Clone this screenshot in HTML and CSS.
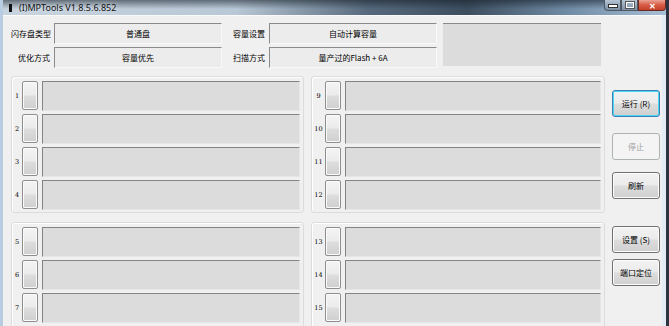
FILE: index.html
```html
<!DOCTYPE html>
<html lang="zh-CN">
<head>
    <meta charset="UTF-8">
    <title>(I)MPTools V1.8.5.6.852</title>
    <link rel="stylesheet" href="styles.css">
</head>
<body>
    <div class="window">
        <div class="titlebar">
            <span class="app-icon"></span>
            <span class="title">(I)MPTools V1.8.5.6.852</span>
            <div class="caption-btns">
                <span class="cap cap-min"><i></i></span>
                <span class="cap cap-max"><i></i></span>
                <span class="cap cap-close">&#x2715;</span>
            </div>
        </div>

        <div class="client">
            <!-- settings summary -->
            <div class="info">
                <div class="info-col">
                    <div class="info-row">
                        <label class="info-label">闪存盘类型</label>
                        <div class="info-field">普通盘</div>
                    </div>
                    <div class="info-row">
                        <label class="info-label">优化方式</label>
                        <div class="info-field">容量优先</div>
                    </div>
                </div>
                <div class="info-col">
                    <div class="info-row">
                        <label class="info-label wide">容量设置</label>
                        <div class="info-field">自动计算容量</div>
                    </div>
                    <div class="info-row">
                        <label class="info-label wide">扫描方式</label>
                        <div class="info-field">量产过的Flash + 6A</div>
                    </div>
                </div>
                <div class="status-box"></div>
            </div>

            <div class="main">
                <div class="ports" id="ports"></div>

                <div class="side">
                    <button class="btn default btn-run">运行 (R)</button>
                    <button class="btn btn-stop" disabled>停止</button>
                    <button class="btn btn-refresh">刷新</button>
                    <button class="btn btn-settings">设置 (S)</button>
                    <button class="btn btn-locate">端口定位</button>
                </div>
            </div>
        </div>
        <div class="frame-right"></div>
    </div>

    <script>
        // port groups; the lower ones run past the window bottom, so only the visible rows
        const groups = [[1, 2, 3, 4], [9, 10, 11, 12], [5, 6, 7], [13, 14, 15]];
        const ports = document.getElementById('ports');

        for (let g = 0; g < groups.length; g++) {
            const box = document.createElement('div');
            box.className = 'group' + (g % 2 ? ' group-right' : '') + (g > 1 ? ' group-lower' : '');
            box.innerHTML = groups[g].map(n => `
                <div class="port">
                    <span class="num">${n}</span>
                    <span class="port-btn"></span>
                    <div class="port-field"></div>
                </div>`).join('');
            ports.appendChild(box);
        }
    </script>
</body>
</html>
```

FILE: styles.css
```css
body {
    margin: 0;
    padding: 0;
    width: 669px;
    height: 326px;
    overflow: hidden;
    font-family: "Noto Sans CJK SC", "Noto Sans", sans-serif;
    font-size: 8px;
    color: #000;
    background-color: #2b3440;
}
.window {
    position: relative;
    width: 666px;
    height: 326px;
    overflow: hidden;
    background: #dfe8f1;
    border-left: 3px solid #b8cde2;
    box-sizing: border-box;
}

/* title bar */
.titlebar {
    position: relative;
    height: 15px;
    display: flex;
    align-items: center;
    padding-left: 3px;
    background:
        linear-gradient(180deg, rgba(20, 30, 40, 0.55) 0%, rgba(20, 30, 40, 0) 60%),
        linear-gradient(90deg, #c7d3de 0%, #b9c8d6 35%, #56697c 55%, #3c4d5e 70%, #6f8aa4 85%, #a8c0d6 100%);
}
.app-icon {
    width: 3px;
    height: 8px;
    background: #111;
    margin-left: 3px;
    margin-right: 7px;
}
.title {
    font-family: "Noto Sans", sans-serif;
    font-size: 9px;
    color: #111;
    text-shadow: 0 0 4px #e8eef4;
}
.caption-btns {
    position: absolute;
    top: 0;
    right: 0;
    display: flex;
}
.cap {
    height: 11px;
    display: flex;
    align-items: center;
    justify-content: center;
    border: 1px solid #4c5864;
    border-top: none;
    box-sizing: border-box;
}
.cap-min, .cap-max {
    width: 17px;
    background: linear-gradient(180deg, #b4c3d2, #7c90a4);
}
.cap-min {
    border-radius: 0 0 0 4px;
    align-items: flex-end;
    padding-bottom: 2px;
}
.cap-min i {
    width: 8px;
    height: 2px;
    background: #fff;
    border: 1px solid #333;
}
.cap-max i {
    width: 6px;
    height: 4px;
    border: 1px solid #fff;
    outline: 1px solid #555;
}
.cap-close {
    width: 28px;
    background: linear-gradient(180deg, #e9a394, #d65a44 50%, #c4412b);
    border-color: #6a2a20;
    border-radius: 0 0 4px 0;
    color: #fff;
    font-size: 8px;
    font-weight: bold;
}

/* client area */
.client {
    background: #f0f0f0;
    height: 311px;
    width: 659px;
    box-sizing: border-box;
    padding: 7px 0 0 8px;
    border-top: 1px solid #fafafa;
}
.info {
    display: flex;
    height: 44px;
}
.info-col {
    display: flex;
    flex-direction: column;
    gap: 3px;
}
.info-row {
    display: flex;
    align-items: center;
    height: 21px;
}
.info-label {
    width: 43px;
    padding-right: 4px;
    box-sizing: border-box;
    text-align: right;
    white-space: nowrap;
}
.info-label.wide {
    width: 47px;
}
.info-field {
    width: 168px;
    height: 21px;
    box-sizing: border-box;
    display: flex;
    align-items: center;
    justify-content: center;
    background: #ececec;
    border: 1px solid #f8f8f8;
    border-top-color: #8a8a8a;
    border-left-color: #8a8a8a;
}
.status-box {
    width: 158px;
    height: 43px;
    margin-left: 6px;
    box-sizing: border-box;
    background: #dcdcdc;
    border-top: 1px solid #8a8a8a;
}

/* ports */
.main {
    display: flex;
    margin-top: 9px;
}
.ports {
    display: grid;
    grid-template-columns: 293px 294px;
    column-gap: 7px;
    row-gap: 9px;
    width: 594px;
}
.group {
    display: flex;
    flex-direction: column;
    gap: 4px;
    height: 137px;
    box-sizing: border-box;
    padding: 4px 3px 3px 0;
    border: 1px solid #dcdcdc;
    border-radius: 3px;
    box-shadow: inset 1px 1px 0 #fff;
}
.group-lower {
    padding-top: 4px;
}
.port {
    display: flex;
    align-items: center;
    height: 29px;
}
.num {
    width: 10px;
    text-align: center;
    font-family: "DejaVu Serif", serif;
    font-size: 6.5px;
    color: #000;
}
.group-right .num {
    width: 13px;
}
.port-btn {
    width: 16px;
    height: 29px;
    box-sizing: border-box;
    border: 1px solid #8e8e8e;
    border-radius: 2px;
    background: linear-gradient(180deg, #f4f4f4 0%, #ebebeb 48%, #dddddd 52%, #cfcfcf 100%);
    box-shadow: inset 0 0 0 1px #fbfbfb;
}
.port-field {
    flex: 1;
    height: 30px;
    margin-left: 4px;
    box-sizing: border-box;
    background: #dcdcdc;
    border: 1px solid #e6e6e6;
    border-top-color: #848484;
    border-left-color: #848484;
}

/* side buttons */
.side {
    display: flex;
    flex-direction: column;
    margin-left: 7px;
}
.btn {
    width: 48px;
    height: 27px;
    padding: 0;
    font-family: "Noto Sans CJK SC", sans-serif;
    font-size: 8px;
    color: #000;
    border: 1px solid #707070;
    border-radius: 3px;
    background: linear-gradient(180deg, #f2f2f2 0%, #ebebeb 48%, #dddddd 52%, #cfcfcf 100%);
    box-shadow: inset 0 0 0 1px #fcfcfc;
}
.btn.default {
    border-color: #3c7fb1;
    box-shadow: inset 0 0 0 1px #48d7fa;
}
.btn:disabled {
    color: #a0a0a0;
    border-color: #adb2b5;
    background: #f4f4f4;
    box-shadow: none;
}
.btn-run { margin-top: 14px; }
.btn-stop { margin-top: 16px; }
.btn-refresh { margin-top: 12px; }
.btn-settings { margin-top: 27px; }
.btn-locate { margin-top: 6px; }

.frame-right {
    position: absolute;
    top: 15px;
    right: 0;
    width: 4px;
    height: 311px;
    background: #e3ecf4;
}
```
